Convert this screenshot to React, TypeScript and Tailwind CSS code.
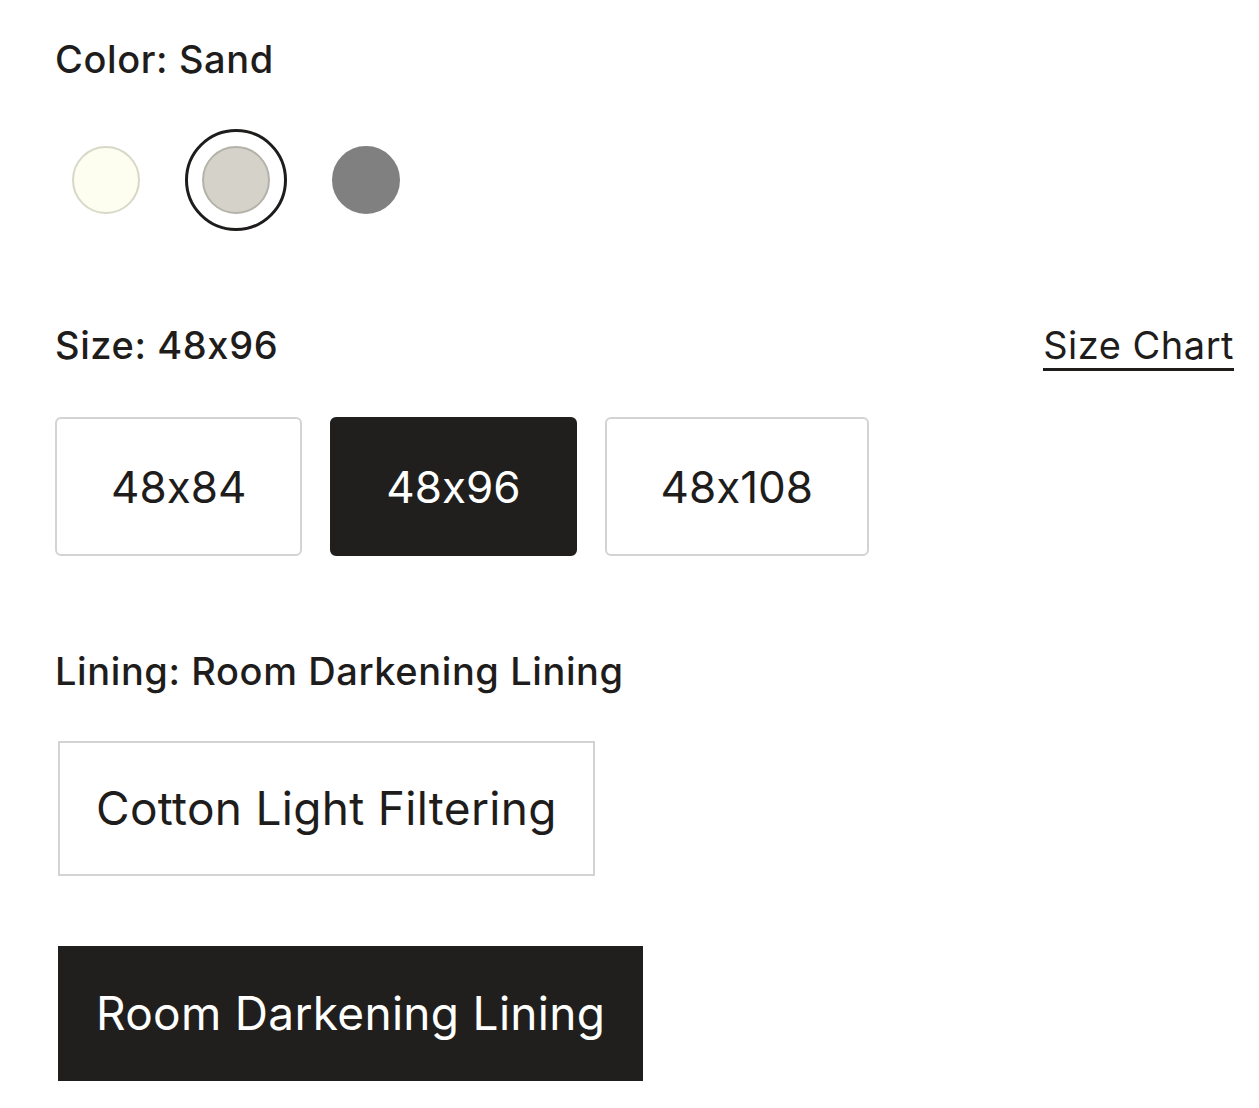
import React, { useState } from 'react';

const swatches = [
  { name: 'Ivory', fill: 'bg-[#fdfdf0]', ring: 'border-[#d8d8c8]' },
  { name: 'Sand', fill: 'bg-[#d5d2ca]', ring: 'border-[#b5b2aa]' },
  { name: 'Stone', fill: 'bg-[#808080]', ring: 'border-[#808080]' },
];

const sizes = ['48x84', '48x96', '48x108'];
const linings = ['Cotton Light Filtering', 'Room Darkening Lining'];

export default function App() {
  const [color, setColor] = useState('Sand');
  const [size, setSize] = useState('48x96');
  const [lining, setLining] = useState('Room Darkening Lining');

  return (
    <div className="min-h-screen bg-white pl-[55px] pr-[25px] pt-[37px] text-[#1f1d1c] font-['Inter',sans-serif] [font-feature-settings:'calt'_0]">
      {/* Color */}
      <div className="text-[38px] leading-[44px] font-medium tracking-[0.6px]">Color: {color}</div>
      <div className="mt-[48px] flex gap-[28px]">
        {swatches.map((s) => (
          <button
            key={s.name}
            onClick={() => setColor(s.name)}
            className={`flex h-[102px] w-[102px] items-center justify-center rounded-full border-[3px] ${
              color === s.name ? 'border-[#1f1d1c]' : 'border-transparent'
            }`}
          >
            <span className={`block h-[68px] w-[68px] rounded-full border-2 ${s.fill} ${s.ring}`} />
          </button>
        ))}
      </div>

      {/* Size */}
      <div className="mt-[92px] flex items-start justify-between">
        <div className="text-[38px] leading-[44px] font-medium tracking-[0.6px]">Size: {size}</div>
        <a className="border-b-[3px] border-[#1f1d1c] pb-[1px] text-[38px] leading-[44px] tracking-[0.5px]">Size Chart</a>
      </div>
      <div className="mt-[46px] flex gap-[28px]">
        {sizes.map((s) => (
          <button
            key={s}
            onClick={() => setSize(s)}
            className={`flex h-[139px] items-center rounded-[6px] border-2 px-[54px] text-[44px] ${
              size === s ? 'border-[#211f1e] bg-[#211f1e] text-white' : 'border-[#d3d3d3] bg-white text-[#1f1d1c]'
            }`}
          >
            {s}
          </button>
        ))}
      </div>

      {/* Lining */}
      <div className="mt-[93px] text-[38px] leading-[44px] font-medium tracking-[0.6px]">Lining: {lining}</div>
      <div className="mt-[48px] ml-[3px] flex flex-col items-start gap-[70px]">
        {linings.map((l) => (
          <button
            key={l}
            onClick={() => setLining(l)}
            className={`flex h-[135px] items-center border-2 px-[36px] text-[46px] tracking-[0.3px] ${
              lining === l ? 'border-[#211f1e] bg-[#211f1e] text-white' : 'border-[#d3d3d3] bg-white text-[#1f1d1c]'
            }`}
          >
            {l}
          </button>
        ))}
      </div>
    </div>
  );
}
